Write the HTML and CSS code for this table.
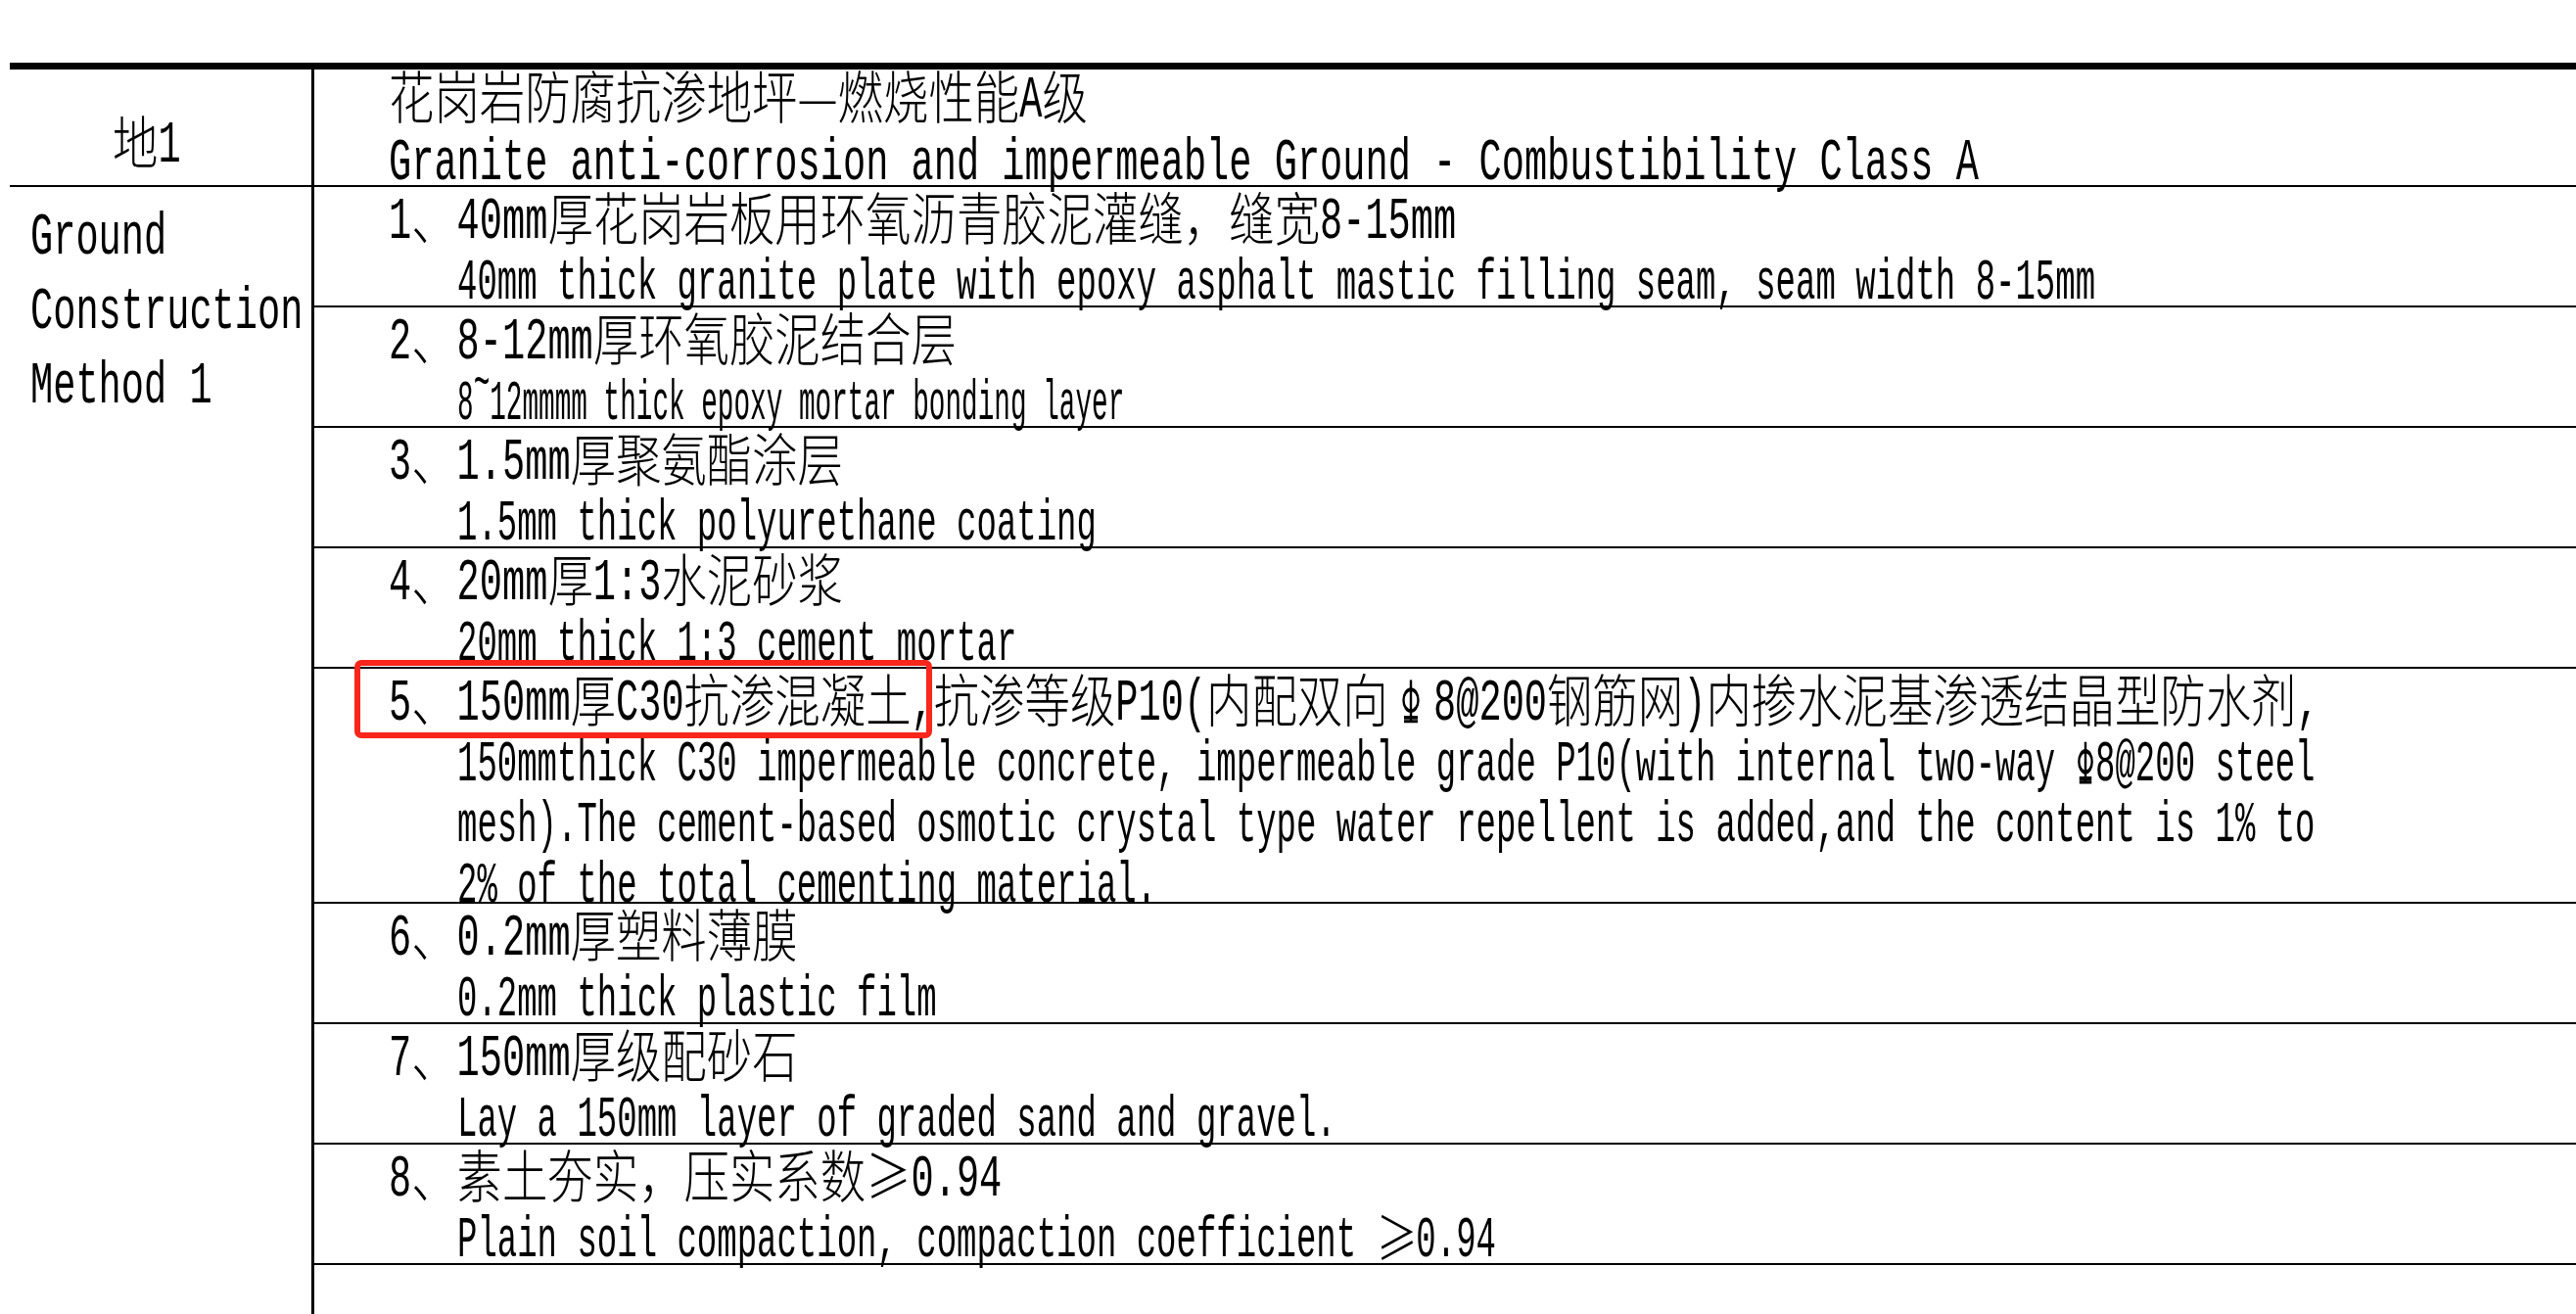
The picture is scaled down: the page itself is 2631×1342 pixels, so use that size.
FILE: index.html
```html
<!DOCTYPE html>
<html>
	<head>
		<meta charset="UTF-8">
		<title>地1 花岗岩防腐抗渗地坪</title>
		<link rel="stylesheet" href="styles.css">
	</head>
	<body>
		<div class="sheet">
			<div class="table">
				<div class="code">
					<div class="ln"><span class="z">地</span>1</div>
				</div>
				<div class="head">
					<div class="ln"><span class="z">花岗岩防腐抗渗地坪—燃烧性能</span>A<span class="z">级</span></div>
					<div class="ln">Granite anti-corrosion and impermeable Ground - Combustibility Class A</div>
				</div>
				<div class="method">
					<div class="ln">Ground</div>
					<div class="ln">Construction</div>
					<div class="ln">Method 1</div>
				</div>
				<div class="items">
					<div class="item">
						<div class="ln">1<span class="z">、</span>40mm<span class="z">厚花岗岩板用环氧沥青胶泥灌缝，缝宽</span>8-15mm</div>
						<div class="ln en">40mm thick granite plate with epoxy asphalt mastic filling seam, seam width 8-15mm</div>
					</div>
					<div class="item">
						<div class="ln">2<span class="z">、</span>8-12mm<span class="z">厚环氧胶泥结合层</span></div>
						<div class="ln en sm">8<span class="tl">~</span>12mmmm thick epoxy mortar bonding layer</div>
					</div>
					<div class="item">
						<div class="ln">3<span class="z">、</span>1.5mm<span class="z">厚聚氨酯涂层</span></div>
						<div class="ln en">1.5mm thick polyurethane coating</div>
					</div>
					<div class="item">
						<div class="ln">4<span class="z">、</span>20mm<span class="z">厚</span>1:3<span class="z">水泥砂浆</span></div>
						<div class="ln en">20mm thick 1:3 cement mortar</div>
					</div>
					<div class="item tall">
						<div class="ln">5<span class="z">、</span>150mm<span class="z">厚</span>C30<span class="z">抗渗混凝土</span>,<span class="z">抗渗等级</span>P10(<span class="z">内配双向</span><span class="w2"><svg class="bar" viewBox="0 0 18 40" preserveAspectRatio="none"><line x1="9" y1="0" x2="9" y2="39"/><ellipse cx="9" cy="19" rx="7.5" ry="10"/><line x1="2" y1="35" x2="16" y2="35"/><line x1="2" y1="39" x2="16" y2="39"/></svg></span>8@200<span class="z">钢筋网</span>)<span class="z">内掺水泥基渗透结晶型防水剂</span>,</div>
						<div class="ln en">150mmthick C30 impermeable concrete, impermeable grade P10(with internal two-way <span class="w1"><svg class="bar" viewBox="0 0 18 40" preserveAspectRatio="none"><line x1="9" y1="0" x2="9" y2="39"/><ellipse cx="9" cy="19" rx="7.5" ry="10"/><line x1="2" y1="35" x2="16" y2="35"/><line x1="2" y1="39" x2="16" y2="39"/></svg></span>8@200 steel</div>
						<div class="ln en">mesh).The cement-based osmotic crystal type water repellent is added,and the content is 1% to</div>
						<div class="ln en">2% of the total cementing material.</div>
						<div class="mark"></div>
					</div>
					<div class="item">
						<div class="ln">6<span class="z">、</span>0.2mm<span class="z">厚塑料薄膜</span></div>
						<div class="ln en">0.2mm thick plastic film</div>
					</div>
					<div class="item">
						<div class="ln">7<span class="z">、</span>150mm<span class="z">厚级配砂石</span></div>
						<div class="ln en">Lay a 150mm layer of graded sand and gravel.</div>
					</div>
					<div class="item">
						<div class="ln">8<span class="z">、素土夯实，压实系数</span><span class="w2"><span class="z">≥</span></span>0.94</div>
						<div class="ln en">Plain soil compaction, compaction coefficient <span class="w2"><span class="z">≥</span></span>0.94</div>
					</div>
					<div class="item rest"></div>
				</div>
			</div>
		</div>
	</body>
</html>
```

FILE: styles.css
```css
html,body{margin:0;padding:0;background:#fff;}
body{font:38.67px/38px "Liberation Mono","Noto Sans CJK SC",monospace;color:#000;}

.sheet{padding:64px 0 0 10px;}
.table{display:grid;grid-template-columns:311px 1fr;border-top:7px solid #000;}

/* left column: code + method name */
.code,.method{box-sizing:border-box;border-right:3px solid #000;}
.code,.head{box-sizing:border-box;height:120px;border-bottom:2px solid #000;}
.code{padding:58px 0 0 105px;}
.head{padding:12px 0 0 76px;}
.head .ln + .ln{margin-top:26px;}
.method{padding:32px 0 0 21px;}
.method .ln + .ln{margin-top:38px;}

/* right column: layer rows */
.items{display:flex;flex-direction:column;}
.item{position:relative;box-sizing:border-box;height:123px;border-bottom:2px solid #000;padding:16px 0 0 76px;}
.item.tall{height:240px;}
.item.rest{height:50px;border-bottom:0;}
.item .ln + .ln{margin-top:24px;}
.item .en{margin-left:70px;}

/* tall narrow cad-style lettering */
.ln{height:38px;white-space:pre;transform:scaleY(1.57);transform-origin:50% 16.5px;}
.ln.en{font-size:34px;transform:scaleY(1.72);transform-origin:50% 16.8px;}
.item .ln.sm{height:29px;line-height:29px;margin-top:28px;font-size:27.7px;transform:scaleY(2.1);transform-origin:50% 12.7px;}
.z{display:inline-block;font-family:"Noto Sans CJK SC",sans-serif;font-weight:300;font-size:46.4px;line-height:16px;transform:scaleY(0.796);transform-origin:50% 34.1px;}
.en .z{font-size:42px;}
.w1,.w2{display:inline-block;text-align:center;}
.w1{width:1ch;}
.w2{width:2ch;}
.tl{display:inline-block;transform:translateY(-0.35em);}

.bar{width:18px;height:28px;vertical-align:-2px;fill:none;stroke:#000;stroke-width:2.4px;}
.en .bar{width:16px;height:25px;}
.bar *{vector-effect:non-scaling-stroke;}

.mark{position:absolute;left:41px;top:-9px;width:590px;height:80px;box-sizing:border-box;border:6px solid #f8261b;border-radius:7px;}
```
